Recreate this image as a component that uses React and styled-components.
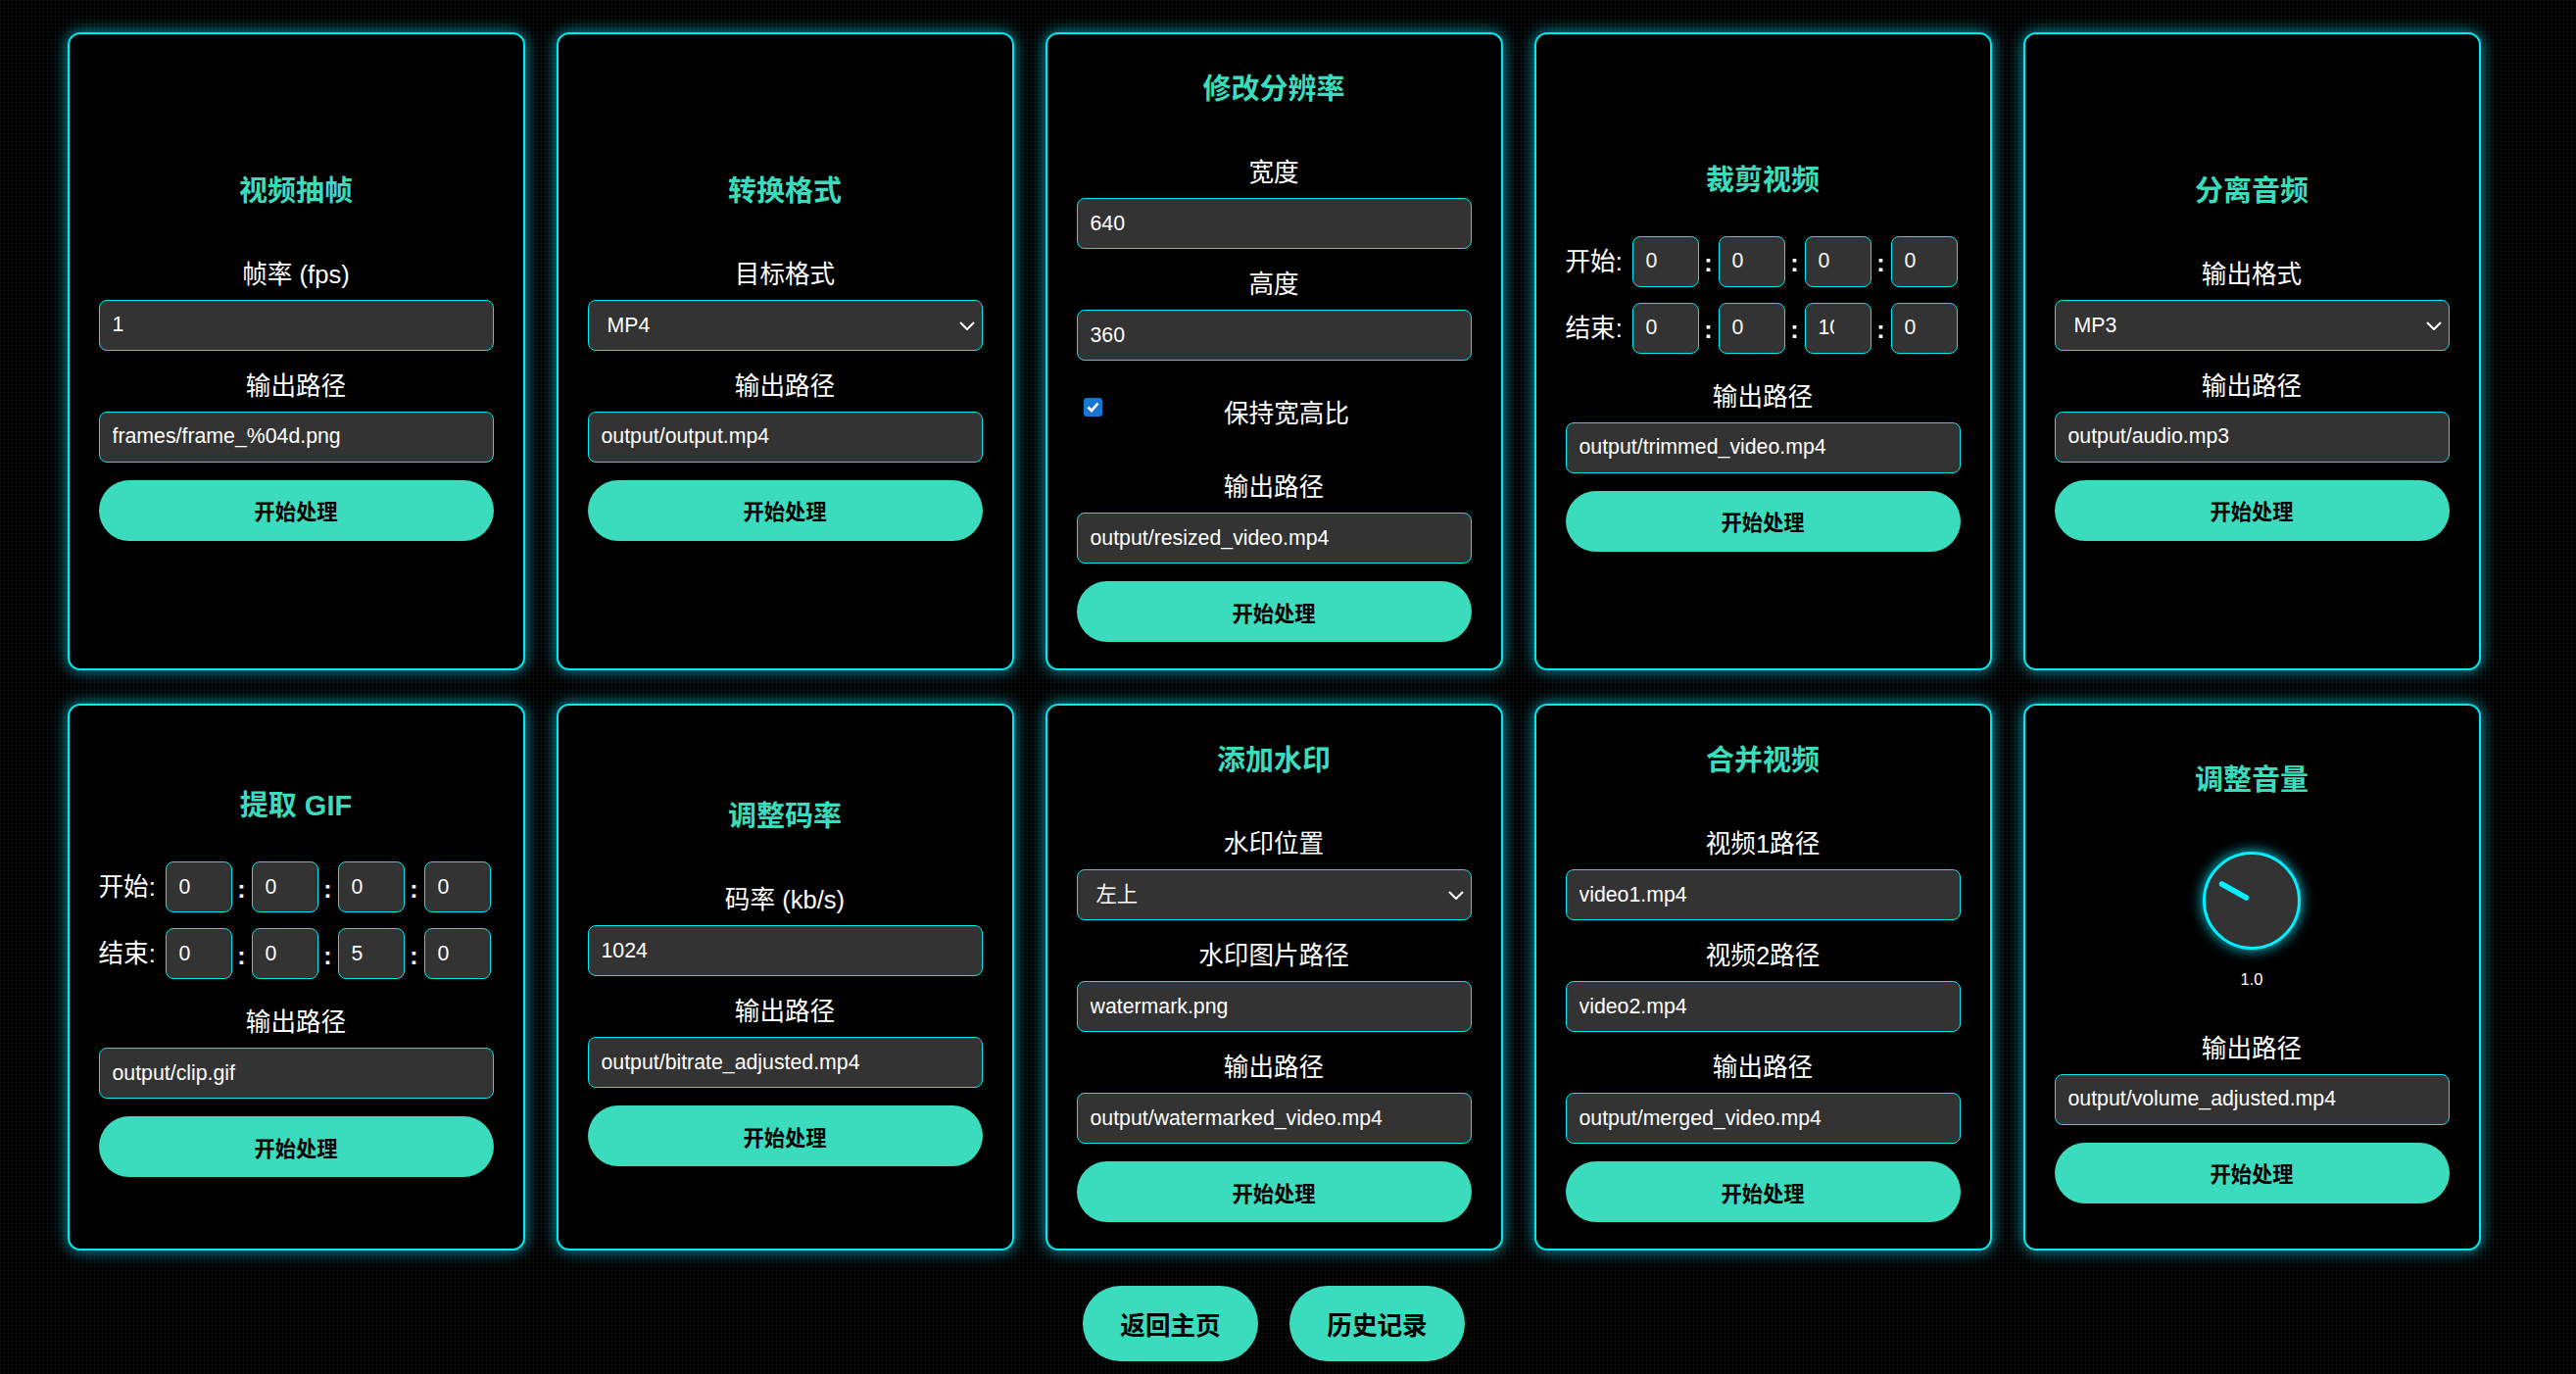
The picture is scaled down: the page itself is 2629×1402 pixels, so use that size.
import styled, { createGlobalStyle } from 'styled-components';

const GlobalStyle = createGlobalStyle`
  html, body {
    margin: 0;
    padding: 0;
  }
  body {
    min-height: 100vh;
    color: #fff;
    font-family: "Liberation Sans", "Noto Sans CJK SC", sans-serif;
    background-color: #000;
    background-image:
      linear-gradient(rgba(255, 255, 255, 0.03) 1px, transparent 1px),
      linear-gradient(90deg, rgba(255, 255, 255, 0.03) 1px, transparent 1px);
    background-size: 4px 4px;
  }
  * {
    box-sizing: border-box;
  }
`;

function SelectBox({ value }) {
  return (
    <SelectWrap>
      <Select defaultValue={value}>
        <option>{value}</option>
      </Select>
      <Chevron viewBox="0 0 16 9" width="16" height="9">
        <polyline points="1,1 8,8 15,1" fill="none" stroke="#fff" strokeWidth="2" />
      </Chevron>
    </SelectWrap>
  );
}

function Field({ label, value, select }) {
  return (
    <>
      <Label>{label}</Label>
      {select ? <SelectBox value={value} /> : <Input defaultValue={value} />}
    </>
  );
}

function TimeRow({ label, values }) {
  return (
    <TimeLine>
      <TimeLabel>{label}:</TimeLabel>
      {values.map((v, i) => (
        <TimeCell key={i}>
          {i > 0 && <Sep>:</Sep>}
          <TimeInput defaultValue={v} />
        </TimeCell>
      ))}
    </TimeLine>
  );
}

export default function App() {
  return (
    <Page>
      <GlobalStyle />
      <Grid>
        <Card>
          <Title>视频抽帧</Title>
          <Field label="帧率 (fps)" value="1" />
          <Field label="输出路径" value="frames/frame_%04d.png" />
          <ActionButton>开始处理</ActionButton>
        </Card>

        <Card>
          <Title>转换格式</Title>
          <Field label="目标格式" value="MP4" select />
          <Field label="输出路径" value="output/output.mp4" />
          <ActionButton>开始处理</ActionButton>
        </Card>

        <Card>
          <Title>修改分辨率</Title>
          <Field label="宽度" value="640" />
          <Field label="高度" value="360" />
          <CheckRow>
            <CheckBox>
              <svg viewBox="0 0 19 19" width="19" height="19">
                <polyline points="4.5,9.5 8,13 14.5,5.5" fill="none" stroke="#fff" strokeWidth="2.6" />
              </svg>
            </CheckBox>
            <CheckText>保持宽高比</CheckText>
          </CheckRow>
          <Field label="输出路径" value="output/resized_video.mp4" />
          <ActionButton>开始处理</ActionButton>
        </Card>

        <Card>
          <Title>裁剪视频</Title>
          <TimeRow label="开始" values={['0', '0', '0', '0']} />
          <TimeRow label="结束" values={['0', '0', '10', '0']} />
          <Field label="输出路径" value="output/trimmed_video.mp4" />
          <ActionButton>开始处理</ActionButton>
        </Card>

        <Card>
          <Title>分离音频</Title>
          <Field label="输出格式" value="MP3" select />
          <Field label="输出路径" value="output/audio.mp3" />
          <ActionButton>开始处理</ActionButton>
        </Card>

        <Card>
          <Title>提取 GIF</Title>
          <TimeRow label="开始" values={['0', '0', '0', '0']} />
          <TimeRow label="结束" values={['0', '0', '5', '0']} />
          <Field label="输出路径" value="output/clip.gif" />
          <ActionButton>开始处理</ActionButton>
        </Card>

        <Card>
          <Title>调整码率</Title>
          <Field label="码率 (kb/s)" value="1024" />
          <Field label="输出路径" value="output/bitrate_adjusted.mp4" />
          <ActionButton>开始处理</ActionButton>
        </Card>

        <Card>
          <Title>添加水印</Title>
          <Field label="水印位置" value="左上" select />
          <Field label="水印图片路径" value="watermark.png" />
          <Field label="输出路径" value="output/watermarked_video.mp4" />
          <ActionButton>开始处理</ActionButton>
        </Card>

        <Card>
          <Title>合并视频</Title>
          <Field label="视频1路径" value="video1.mp4" />
          <Field label="视频2路径" value="video2.mp4" />
          <Field label="输出路径" value="output/merged_video.mp4" />
          <ActionButton>开始处理</ActionButton>
        </Card>

        <Card>
          <Title>调整音量</Title>
          <Knob>
            <svg viewBox="-46.5 -46.5 93 93" width="93" height="93">
              <line x1="-5" y1="-2.5" x2="-30" y2="-16.5" stroke="#00f0ff" strokeWidth="5.5" strokeLinecap="round" />
            </svg>
          </Knob>
          <KnobValue>1.0</KnobValue>
          <Field label="输出路径" value="output/volume_adjusted.mp4" />
          <ActionButton>开始处理</ActionButton>
        </Card>
      </Grid>

      <Footer>
        <NavButton>返回主页</NavButton>
        <NavButton>历史记录</NavButton>
      </Footer>
    </Page>
  );
}

const teal = '#3bdcbd';
const cyan = '#00e8f0';

const Page = styled.div`
  display: flex;
  flex-direction: column;
  align-items: center;
  padding: 33px 29px 0 0;
`;

const Grid = styled.div`
  display: grid;
  grid-template-columns: repeat(5, 467px);
  column-gap: 32px;
  row-gap: 34px;
`;

const Card = styled.section`
  display: flex;
  flex-direction: column;
  justify-content: center;
  padding: 27px 30px;
  border: 2px solid ${cyan};
  border-radius: 13px;
  background: #000;
  box-shadow: 0 0 16px rgba(0, 229, 255, 0.7);
  text-align: center;
`;

const Title = styled.h2`
  margin: 10px 0 38px;
  font-size: 29px;
  line-height: 38px;
  font-weight: 700;
  color: ${teal};
`;

const Label = styled.label`
  display: block;
  margin: 11px 0 9px;
  font-size: 25.6px;
  line-height: 34px;
`;

const Input = styled.input`
  display: block;
  width: 100%;
  height: 52px;
  margin: 0 0 8px;
  padding: 0 13px;
  border: 1.5px solid ${cyan};
  border-radius: 8px;
  background: #333;
  color: #fff;
  font-family: "Liberation Sans", "Noto Sans CJK SC", sans-serif;
  font-size: 21.3px;
  outline: none;
`;

const SelectWrap = styled.div`
  position: relative;
  margin: 0 0 8px;
`;

const Select = styled.select`
  display: block;
  width: 100%;
  height: 52px;
  padding: 0 40px 0 19px;
  appearance: none;
  border: 1.5px solid ${cyan};
  border-radius: 8px;
  background: #333;
  color: #fff;
  font-family: "Liberation Sans", "Noto Sans CJK SC", sans-serif;
  font-size: 21.3px;
  outline: none;
`;

const Chevron = styled.svg`
  position: absolute;
  right: 8px;
  top: 22px;
  pointer-events: none;
`;

const ActionButton = styled.button`
  width: 100%;
  height: 62px;
  margin-top: 10px;
  border: none;
  border-radius: 31px;
  background: ${teal};
  color: #000;
  font-family: "Liberation Sans", "Noto Sans CJK SC", sans-serif;
  font-size: 21.3px;
  font-weight: 700;
  cursor: pointer;
`;

const TimeLine = styled.div`
  display: flex;
  align-items: center;
  margin-bottom: 16px;
`;

const TimeLabel = styled.span`
  width: 58px;
  margin-right: 10px;
  font-size: 25.6px;
  line-height: 34px;
  text-align: left;
  white-space: nowrap;
`;

const TimeCell = styled.div`
  display: flex;
  align-items: center;
`;

const Sep = styled.span`
  width: 20px;
  padding-top: 4px;
  font-size: 25px;
  font-weight: 700;
  text-align: center;
`;

const TimeInput = styled(Input)`
  width: 68px;
  margin: 0;
  padding: 0 37px 0 13px;
`;

const CheckRow = styled.div`
  display: flex;
  align-items: flex-start;
  padding: 29px 0 30px 7px;
`;

const CheckBox = styled.span`
  display: block;
  width: 19px;
  height: 19px;
  margin-top: 1px;
  border-radius: 3px;
  background: #1677d4;

  svg {
    display: block;
  }
`;

const CheckText = styled.span`
  flex: 1;
  font-size: 25.6px;
  line-height: 34px;
`;

const Knob = styled.div`
  width: 100px;
  height: 100px;
  margin: 16px auto 0;
  border: 3.5px solid #00f0ff;
  border-radius: 50%;
  background: #333;
  box-shadow: 0 0 14px rgba(0, 235, 255, 0.9);

  svg {
    display: block;
  }
`;

const KnobValue = styled.div`
  margin: 20px 0 33px;
  font-size: 16.5px;
  line-height: 20px;
`;

const Footer = styled.div`
  display: flex;
  gap: 32px;
  margin-top: 36px;
`;

const NavButton = styled.button`
  width: 179px;
  height: 77px;
  border: none;
  border-radius: 39px;
  background: ${teal};
  color: #000;
  font-family: "Liberation Sans", "Noto Sans CJK SC", sans-serif;
  font-size: 25.6px;
  font-weight: 700;
  cursor: pointer;
`;
